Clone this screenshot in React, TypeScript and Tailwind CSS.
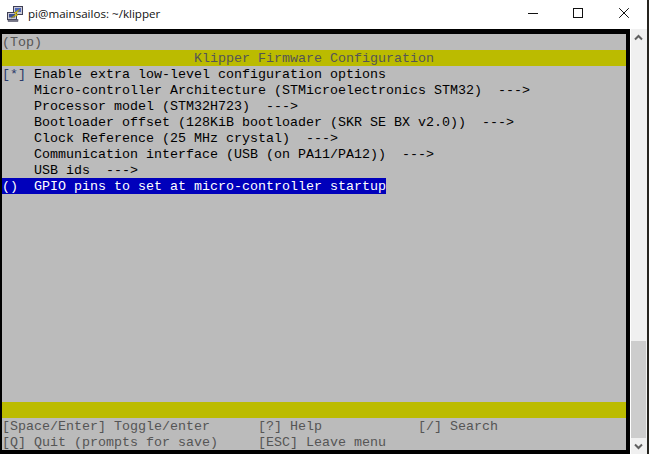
const Row = ({ children, className = "" }: { children?: React.ReactNode; className?: string }) => (
  <div className={`h-4 leading-[18px] whitespace-pre ${className}`}>{children}</div>
);

const rows = [
  "    Micro-controller Architecture (STMicroelectronics STM32)  --->",
  "    Processor model (STM32H723)  --->",
  "    Bootloader offset (128KiB bootloader (SKR SE BX v2.0))  --->",
  "    Clock Reference (25 MHz crystal)  --->",
  "    Communication interface (USB (on PA11/PA12))  --->",
  "    USB ids  --->",
];

export default function App() {
  return (
    <div className="w-[649px] h-[454px] overflow-hidden bg-[#26241f] flex">
      <div className="w-[647px] flex flex-col bg-white font-['Open_Sans',sans-serif]">
        <header className="h-[29px] shrink-0 flex items-center">
          <svg width="18" height="18" viewBox="0 0 18 18" className="ml-[6px] mt-[-1px] shrink-0">
            <rect x="7.5" y="1.5" width="9" height="8" fill="#c9c9d6" stroke="#3f3f55" />
            <rect x="9" y="3" width="6" height="4" fill="#4f68b8" />
            <rect x="1.5" y="7.5" width="9" height="7" fill="#c9c9d6" stroke="#3f3f55" />
            <rect x="3" y="9" width="6" height="3.5" fill="#3c4f90" />
            <rect x="2" y="14.5" width="10" height="2" fill="#777788" stroke="#3f3f55" strokeWidth="0.5" />
            <path d="M14 4 L8 8 L10.5 9 L5 13 L12 10 L10 8.5 Z" fill="#f5dc00" stroke="#8a7a00" strokeWidth="0.4" />
          </svg>
          <span className="ml-[4px] text-[11.6px] mt-[-1px] text-[#111]">pi@mainsailos: ~/klipper</span>
          <div className="ml-auto flex items-center mt-[-3px]">
            <svg width="10" height="10" viewBox="0 0 10 10" className="mr-[35px]">
              <path d="M0 5.5H10" stroke="#111" strokeWidth="1" />
            </svg>
            <svg width="10" height="10" viewBox="0 0 10 10" className="mr-[36px]">
              <rect x="0.5" y="0.5" width="9" height="9" fill="none" stroke="#111" />
            </svg>
            <svg width="10" height="10" viewBox="0 0 10 10" className="mr-[18px]">
              <path d="M0.2 0.2L9.8 9.8M9.8 0.2L0.2 9.8" stroke="#111" strokeWidth="1" />
            </svg>
          </div>
        </header>
        <div className="flex-1 flex min-h-0">
          <div className="w-[630px] bg-black pl-[2px] pr-[4px] pt-[5px] pb-[4px]">
            <div className="bg-[#bbbbbb] h-[416px] font-['Liberation_Mono',monospace] text-[13.33px]">
              <Row className="text-[#555555]">(Top)</Row>
              <Row className="bg-[#bbbb00] text-[#555555] pl-[192px]">Klipper Firmware Configuration</Row>
              <Row className="text-black">
                <span className="text-[#2a3a6a]">[*]</span>{" Enable extra low-level configuration options"}
              </Row>
              {rows.map((r, i) => (
                <Row key={i} className="text-black">{r}</Row>
              ))}
              <Row>
                <span className="inline-block h-4 bg-[#0000bb] text-white w-[384px]">{"()  GPIO pins to set at micro-controller startup"}</span>
              </Row>
              <div className="h-[208px]" />
              <Row className="bg-[#bbbb00]" />
              <Row className="text-[#555555]">{"[Space/Enter] Toggle/enter      [?] Help            [/] Search"}</Row>
              <Row className="text-[#555555]">{"[Q] Quit (prompts for save)     [ESC] Leave menu"}</Row>
            </div>
          </div>
          <div className="w-[1px] bg-white" />
          <div className="w-[15px] bg-[#f0f0f0] flex flex-col items-center">
            <div className="h-[17px] flex items-center justify-center">
              <svg width="9" height="7" viewBox="0 0 9 7"><path d="M1 5.5L4.5 2L8 5.5" fill="none" stroke="#606060" strokeWidth="2" /></svg>
            </div>
            <div className="flex-1" />
            <div className="w-full h-[97px] bg-[#cdcdcd]" />
            <div className="h-[16px] flex items-center justify-center">
              <svg width="9" height="7" viewBox="0 0 9 7"><path d="M1 1.5L4.5 5L8 1.5" fill="none" stroke="#606060" strokeWidth="2" /></svg>
            </div>
          </div>
          <div className="w-[1px] bg-[#f0f0f0]" />
        </div>
      </div>
    </div>
  );
}
